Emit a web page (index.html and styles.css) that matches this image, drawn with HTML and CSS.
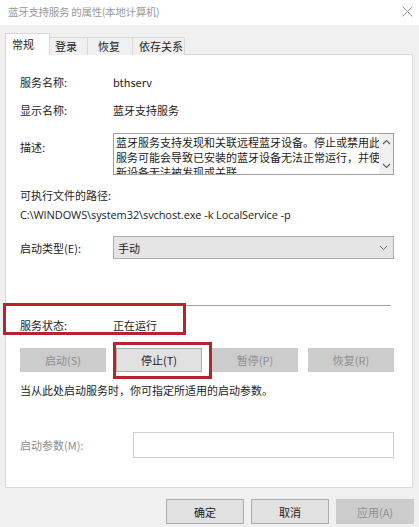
FILE: index.html
```html
<!DOCTYPE html>
<html lang="zh-CN">
<head>
<meta charset="utf-8">
<title>蓝牙支持服务 的属性(本地计算机)</title>
<link rel="stylesheet" href="styles.css">
</head>
<body>
<div class="window">
  <div class="titlebar">
    <span class="title">蓝牙支持服务 的属性(本地计算机)</span>
    <svg class="close" width="11" height="11" viewBox="0 0 11 11"><path d="M0.5 0.5L10.5 10.5M10.5 0.5L0.5 10.5" stroke="#9a9a9a" stroke-width="1" fill="none"/></svg>
  </div>
  <div class="client">
    <div class="tabs">
      <div class="tab active">常规</div>
      <div class="tab">登录</div>
      <div class="tab">恢复</div>
      <div class="tab">依存关系</div>
    </div>
    <div class="panel">
      <div class="row r1"><span class="label">服务名称:</span><span class="value">bthserv</span></div>
      <div class="row r2"><span class="label">显示名称:</span><span class="value">蓝牙支持服务</span></div>
      <div class="row r3">
        <span class="label desc-label">描述:</span>
        <div class="descbox">
          <div class="desctext">蓝牙服务支持发现和关联远程蓝牙设备。停止或禁用此<br>服务可能会导致已安装的蓝牙设备无法正常运行，并使<br>新设备无法被发现或关联。</div>
          <div class="scroll">
            <svg width="9" height="6" viewBox="0 0 9 6"><path d="M1 5L4.5 1.5L8 5" stroke="#606060" stroke-width="1.2" fill="none"/></svg>
            <svg width="9" height="6" viewBox="0 0 9 6"><path d="M1 1L4.5 4.5L8 1" stroke="#606060" stroke-width="1.2" fill="none"/></svg>
          </div>
        </div>
      </div>
      <div class="pathlabel">可执行文件的路径:</div>
      <div class="path">C:\WINDOWS\system32\svchost.exe -k LocalService -p</div>
      <div class="row r5">
        <span class="label">启动类型(E):</span>
        <div class="select"><span>手动</span>
          <svg width="9" height="6" viewBox="0 0 9 6"><path d="M1 1L4.5 4.5L8 1" stroke="#707070" stroke-width="1" fill="none"/></svg>
        </div>
      </div>
      <div class="sep"></div>
      <div class="row r6"><span class="label">服务状态:</span><span class="value">正在运行</span></div>
      <div class="btnrow">
        <div class="btn disabled">启动(S)</div>
        <div class="btn">停止(T)</div>
        <div class="btn disabled">暂停(P)</div>
        <div class="btn disabled">恢复(R)</div>
      </div>
      <div class="hint">当从此处启动服务时，你可指定所适用的启动参数。</div>
      <div class="row r7">
        <span class="label param-label">启动参数(M):</span>
        <div class="input"></div>
      </div>
    </div>
    <div class="footer">
      <div class="fbtn">确定</div>
      <div class="fbtn">取消</div>
      <div class="fbtn disabled">应用(A)</div>
    </div>
  </div>
  <div class="mark mark-status"></div>
  <div class="mark mark-stop"></div>
</div>
</body>
</html>
```
FILE: styles.css
```css
* { box-sizing: border-box; }
html, body { margin: 0; padding: 0; }
body {
  width: 419px;
  height: 527px;
  overflow: hidden;
  font-family: "Noto Sans CJK SC", "Noto Sans", sans-serif;
  font-size: 11px;
  color: #1c1c1c;
  background: #f0f0f0;
}
.window {
  position: relative;
  width: 419px;
  height: 527px;
  display: flex;
  flex-direction: column;
}
.titlebar {
  height: 25px;
  background: #ffffff;
  display: flex;
  align-items: center;
  justify-content: space-between;
  padding: 0 6px 2px 8px;
}
.title { color: #9a9a9a; font-size: 10.5px; letter-spacing: -0.3px; }
.client {
  flex: 1;
  background: #f0f0f0;
  padding: 8px 6px 0 5px;
}
.tabs {
  display: flex;
  height: 22px;
  margin-bottom: -1px;
  position: relative;
  z-index: 1;
}
.tab {
  height: 18px;
  margin-top: 4px;
  border: 1px solid #d9d9d9;
  border-bottom: none;
  border-left: none;
  background: #f0f0f0;
  padding: 0 6px;
  line-height: 16px;
  white-space: nowrap;
}
.tab:nth-child(2) { width: 38px; padding-left: 5px; }
.tab:nth-child(3) { width: 45px; padding-left: 10px; }
.tab:nth-child(4) { width: 52px; padding-left: 6px; }
.tab.active {
  width: 45px;
  height: 22px;
  margin-top: 0;
  background: #ffffff;
  border-left: 1px solid #d9d9d9;
  padding-left: 6px;
  line-height: 21px;
}
.panel {
  height: 434px;
  background: #ffffff;
  border: 1px solid #d9d9d9;
  padding: 0 18px 0 14px;
}
.row { display: flex; align-items: center; }
.label { width: 93px; flex: none; }
.r1 { margin-top: 19px; height: 16px; }
.r2 { margin-top: 12px; height: 16px; }
.r3 { margin-top: 15px; align-items: flex-start; }
.desc-label { padding-top: 6px; }
.descbox {
  flex: 1;
  height: 42px;
  border: 1px solid #a0a0a0;
  display: flex;
  overflow: hidden;
}
.desctext {
  flex: 1;
  padding: 1px 0 0 2px;
  line-height: 15px;
  white-space: nowrap;
  overflow: hidden;
}
.scroll {
  width: 14px;
  background: #f0f0f0;
  display: flex;
  flex-direction: column;
  justify-content: space-between;
  align-items: center;
  padding: 5px 0 5px;
}
.pathlabel { margin-top: 12px; height: 16px; line-height: 16px; }
.path { margin-top: 4px; height: 16px; line-height: 16px; font-family: "Open Sans", "Noto Sans", sans-serif; font-size: 11px; letter-spacing: -0.1px; }
.r5 { margin-top: 13px; }
.select {
  flex: 1;
  height: 23px;
  background: #e5e5e5;
  border: 1px solid #adadad;
  display: flex;
  align-items: center;
  justify-content: space-between;
  padding: 0 5px 0 4px;
}
.sep {
  margin-top: 46px;
  height: 1px;
  background: #a0a0a0;
  margin-right: 3px;
}
.r6 { margin-top: 11px; height: 16px; }
.btnrow {
  margin-top: 15px;
  display: flex;
  justify-content: space-between;
}
.btn {
  width: 86px;
  height: 24px;
  background: #e1e1e1;
  border: 1px solid #adadad;
  display: flex;
  align-items: center;
  justify-content: center;
}
.btn.disabled {
  background: #cccccc;
  border-color: #cccccc;
  color: #8e8e8e;
}
.hint { margin-top: 10px; height: 16px; line-height: 16px; }
.r7 { margin-top: 34px; }
.param-label { width: 113px; color: #8e8e8e; }
.input {
  flex: 1;
  height: 26px;
  background: #ffffff;
  border: 1px solid #cfcfcf;
}
.footer {
  display: flex;
  justify-content: flex-end;
  gap: 7px;
  margin-top: 11px;
  margin-right: -1px;
}
.fbtn {
  width: 78px;
  height: 25px;
  background: #e1e1e1;
  border: 1px solid #adadad;
  display: flex;
  align-items: center;
  justify-content: center;
}
.fbtn.disabled {
  background: #cccccc;
  border-color: #cccccc;
  color: #8e8e8e;
}
.mark {
  position: absolute;
  border: 3px solid #b3262b;
}
.mark-status { left: 3px; top: 303px; width: 183px; height: 32px; }
.mark-stop { left: 113px; top: 342px; width: 99px; height: 37px; }
```
